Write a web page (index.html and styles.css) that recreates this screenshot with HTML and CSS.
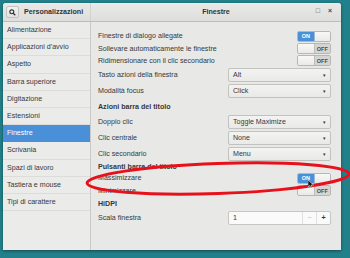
FILE: index.html
```html
<!DOCTYPE html>
<html lang="it">
<head>
    <meta charset="UTF-8">
    <title>Personalizzazioni - Finestre</title>
    <link rel="stylesheet" href="styles.css">
</head>
<body>

<div class="window">
    <div class="headerbar">
        <div class="head-left">
            <span class="search-btn">
                <svg width="7" height="7" viewBox="0 0 10 10"><circle cx="4" cy="4" r="2.8" fill="none" stroke="#333" stroke-width="1.6"/><line x1="6" y1="6" x2="9" y2="9" stroke="#333" stroke-width="1.8"/></svg>
            </span>
            <span class="app-title">Personalizzazioni</span>
        </div>
        <div class="head-right">
            <span class="page-title">Finestre</span>
            <span class="win-btns">
                <span class="win-btn">&#9633;</span>
                <span class="win-btn">&times;</span>
            </span>
        </div>
    </div>

    <div class="main">
        <ul class="sidebar">
            <li>Alimentazione</li>
            <li>Applicazioni d'avvio</li>
            <li>Aspetto</li>
            <li>Barra superiore</li>
            <li>Digitazione</li>
            <li>Estensioni</li>
            <li class="selected">Finestre</li>
            <li>Scrivania</li>
            <li>Spazi di lavoro</li>
            <li>Tastiera e mouse</li>
            <li>Tipi di carattere</li>
        </ul>

        <div class="content">
            <div class="row row-toggle">
                <span>Finestre di dialogo allegate</span>
                <span class="switch on"><span class="sw-label">ON</span><span class="sw-knob"></span></span>
            </div>
            <div class="row row-toggle">
                <span>Sollevare automaticamente le finestre</span>
                <span class="switch off"><span class="sw-knob"></span><span class="sw-label">OFF</span></span>
            </div>
            <div class="row row-toggle">
                <span>Ridimensionare con il clic secondario</span>
                <span class="switch off"><span class="sw-knob"></span><span class="sw-label">OFF</span></span>
            </div>
            <div class="row row-combo">
                <span>Tasto azioni della finestra</span>
                <span class="combo"><span>Alt</span><span class="arrow">&#9662;</span></span>
            </div>
            <div class="row row-combo">
                <span>Modalità focus</span>
                <span class="combo"><span>Click</span><span class="arrow">&#9662;</span></span>
            </div>

            <div class="heading h-first">Azioni barra del titolo</div>
            <div class="row row-combo">
                <span>Doppio clic</span>
                <span class="combo"><span>Toggle Maximize</span><span class="arrow">&#9662;</span></span>
            </div>
            <div class="row row-combo">
                <span>Clic centrale</span>
                <span class="combo"><span>None</span><span class="arrow">&#9662;</span></span>
            </div>
            <div class="row row-combo">
                <span>Clic secondario</span>
                <span class="combo"><span>Menu</span><span class="arrow">&#9662;</span></span>
            </div>

            <div class="heading h-second">Pulsanti barra del titolo</div>
            <div class="row row-toggle">
                <span>Massimizzare</span>
                <span class="switch on"><span class="sw-label">ON</span><span class="sw-knob"></span></span>
            </div>
            <div class="row row-toggle">
                <span>Minimizzare</span>
                <span class="switch off"><span class="sw-knob"></span><span class="sw-label">OFF</span></span>
            </div>

            <div class="heading h-third">HiDPI</div>
            <div class="row row-combo">
                <span>Scala finestra</span>
                <span class="spin"><span class="spin-val">1</span><span class="spin-btn minus">&minus;</span><span class="spin-btn">+</span></span>
            </div>
        </div>
    </div>
</div>

<!-- annotation drawn over the screenshot -->
<svg class="marker" width="350" height="258" viewBox="0 0 350 258">
    <ellipse cx="218" cy="178.5" rx="131" ry="15" transform="rotate(-2 218 178.5)" fill="none" stroke="#e8101a" stroke-width="3"/>
</svg>
<svg class="cursor" width="6" height="8" viewBox="0 0 6 8">
    <polygon points="0,0 0,7 1.8,5.4 3,8 4,7.5 3,5 5.5,5" fill="#111" stroke="#fff" stroke-width="0.5"/>
</svg>

</body>
</html>
```

FILE: styles.css
```css
body {
    margin: 0;
    width: 350px;
    height: 258px;
    background-color: #22808a;
    font-family: "Liberation Sans", Arial, sans-serif;
    font-size: 7.1px;
    color: #33393b;
    padding: 3px 0 0 3px;
    box-sizing: border-box;
    overflow: hidden;
    position: relative;
}

.window {
    width: 338px;
    height: 247px;
    background-color: #e8e8e7;
    border-radius: 3px 3px 0 0;
    box-shadow: 0 1px 3px rgba(0, 0, 0, 0.45);
    display: flex;
    flex-direction: column;
    overflow: hidden;
}

.headerbar {
    height: 18px;
    display: flex;
    background: linear-gradient(#e9e9e8, #dededc);
    border-bottom: 1px solid #bdbdba;
}

.head-left {
    width: 87px;
    display: flex;
    align-items: center;
    border-right: 1px solid #d2d2cf;
}

.search-btn {
    width: 11px;
    height: 10px;
    margin-left: 3px;
    margin-right: 5px;
    border: 1px solid #c3c3c0;
    border-radius: 2px;
    background: linear-gradient(#f2f2f1, #e3e3e1);
    display: flex;
    align-items: center;
    justify-content: center;
}

.app-title, .page-title {
    font-weight: bold;
    color: #2e3436;
}

.head-right {
    flex: 1;
    display: flex;
    align-items: center;
    justify-content: center;
    position: relative;
}

.win-btns {
    position: absolute;
    right: 9px;
    top: 4px;
    display: flex;
    gap: 8px;
}

.win-btn {
    font-size: 7px;
    color: #444;
    font-weight: bold;
}

.main {
    flex: 1;
    display: flex;
}

.sidebar {
    list-style: none;
    margin: 0;
    padding: 0;
    width: 87px;
    background-color: #ebebea;
    border-right: 1px solid #c9c9c6;
}

.sidebar li {
    height: 17.2px;
    line-height: 16.2px;
    padding-left: 4px;
    border-bottom: 1px solid #dcdcda;
    box-sizing: border-box;
}

.sidebar li.selected {
    background-color: #4a90d9;
    color: #ffffff;
    border-bottom-color: #4a90d9;
}

.content {
    flex: 1;
    padding: 8px 10px 0 7px;
    display: flex;
    flex-direction: column;
}

.row {
    display: flex;
    align-items: center;
    justify-content: space-between;
}

.row-toggle {
    height: 12.4px;
}

.row-combo {
    height: 16px;
}

.heading {
    font-weight: bold;
    display: flex;
    align-items: center;
}

.h-first {
    height: 14px;
    margin-top: 1px;
}

.h-second {
    height: 10px;
}

.h-third {
    height: 12.5px;
    margin-top: 1px;
}

.switch {
    width: 34px;
    height: 11px;
    border: 1px solid #b7b7b4;
    border-radius: 2px;
    box-sizing: border-box;
    display: flex;
    overflow: hidden;
}

.switch span {
    flex: 1;
}

.sw-label {
    font-size: 5.5px;
    font-weight: bold;
    display: flex;
    align-items: center;
    justify-content: center;
}

.switch.on .sw-label {
    background-color: #4a90d9;
    color: #ffffff;
}

.switch.off .sw-label {
    background-color: #d4d4d2;
    color: #4a4a4a;
}

.sw-knob {
    background: linear-gradient(#f8f8f7, #eaeae9);
}

.switch.on .sw-knob {
    border-left: 1px solid #9fb9d8;
}

.switch.off .sw-knob {
    border-right: 1px solid #bcbcb9;
}

.combo {
    width: 103px;
    height: 14px;
    box-sizing: border-box;
    border: 1px solid #c2c2bf;
    border-radius: 2px;
    background: linear-gradient(#f3f3f2, #e9e9e8);
    display: flex;
    align-items: center;
    justify-content: space-between;
    padding: 0 4px 0 4px;
}

.arrow {
    font-size: 5px;
    color: #333;
}

.spin {
    width: 103px;
    height: 14px;
    box-sizing: border-box;
    border: 1px solid #c6c6c3;
    border-radius: 2px;
    background-color: #fafafa;
    display: flex;
    align-items: stretch;
}

.spin-val {
    flex: 1;
    padding-left: 4px;
    display: flex;
    align-items: center;
}

.spin-btn {
    width: 13px;
    border-left: 1px solid #e0e0de;
    display: flex;
    align-items: center;
    justify-content: center;
    font-weight: bold;
    color: #333;
}

.spin-btn.minus {
    color: #bbbbb9;
    font-weight: normal;
}

.marker {
    position: absolute;
    left: 0;
    top: 0;
}

.cursor {
    position: absolute;
    left: 308px;
    top: 180px;
}
```
